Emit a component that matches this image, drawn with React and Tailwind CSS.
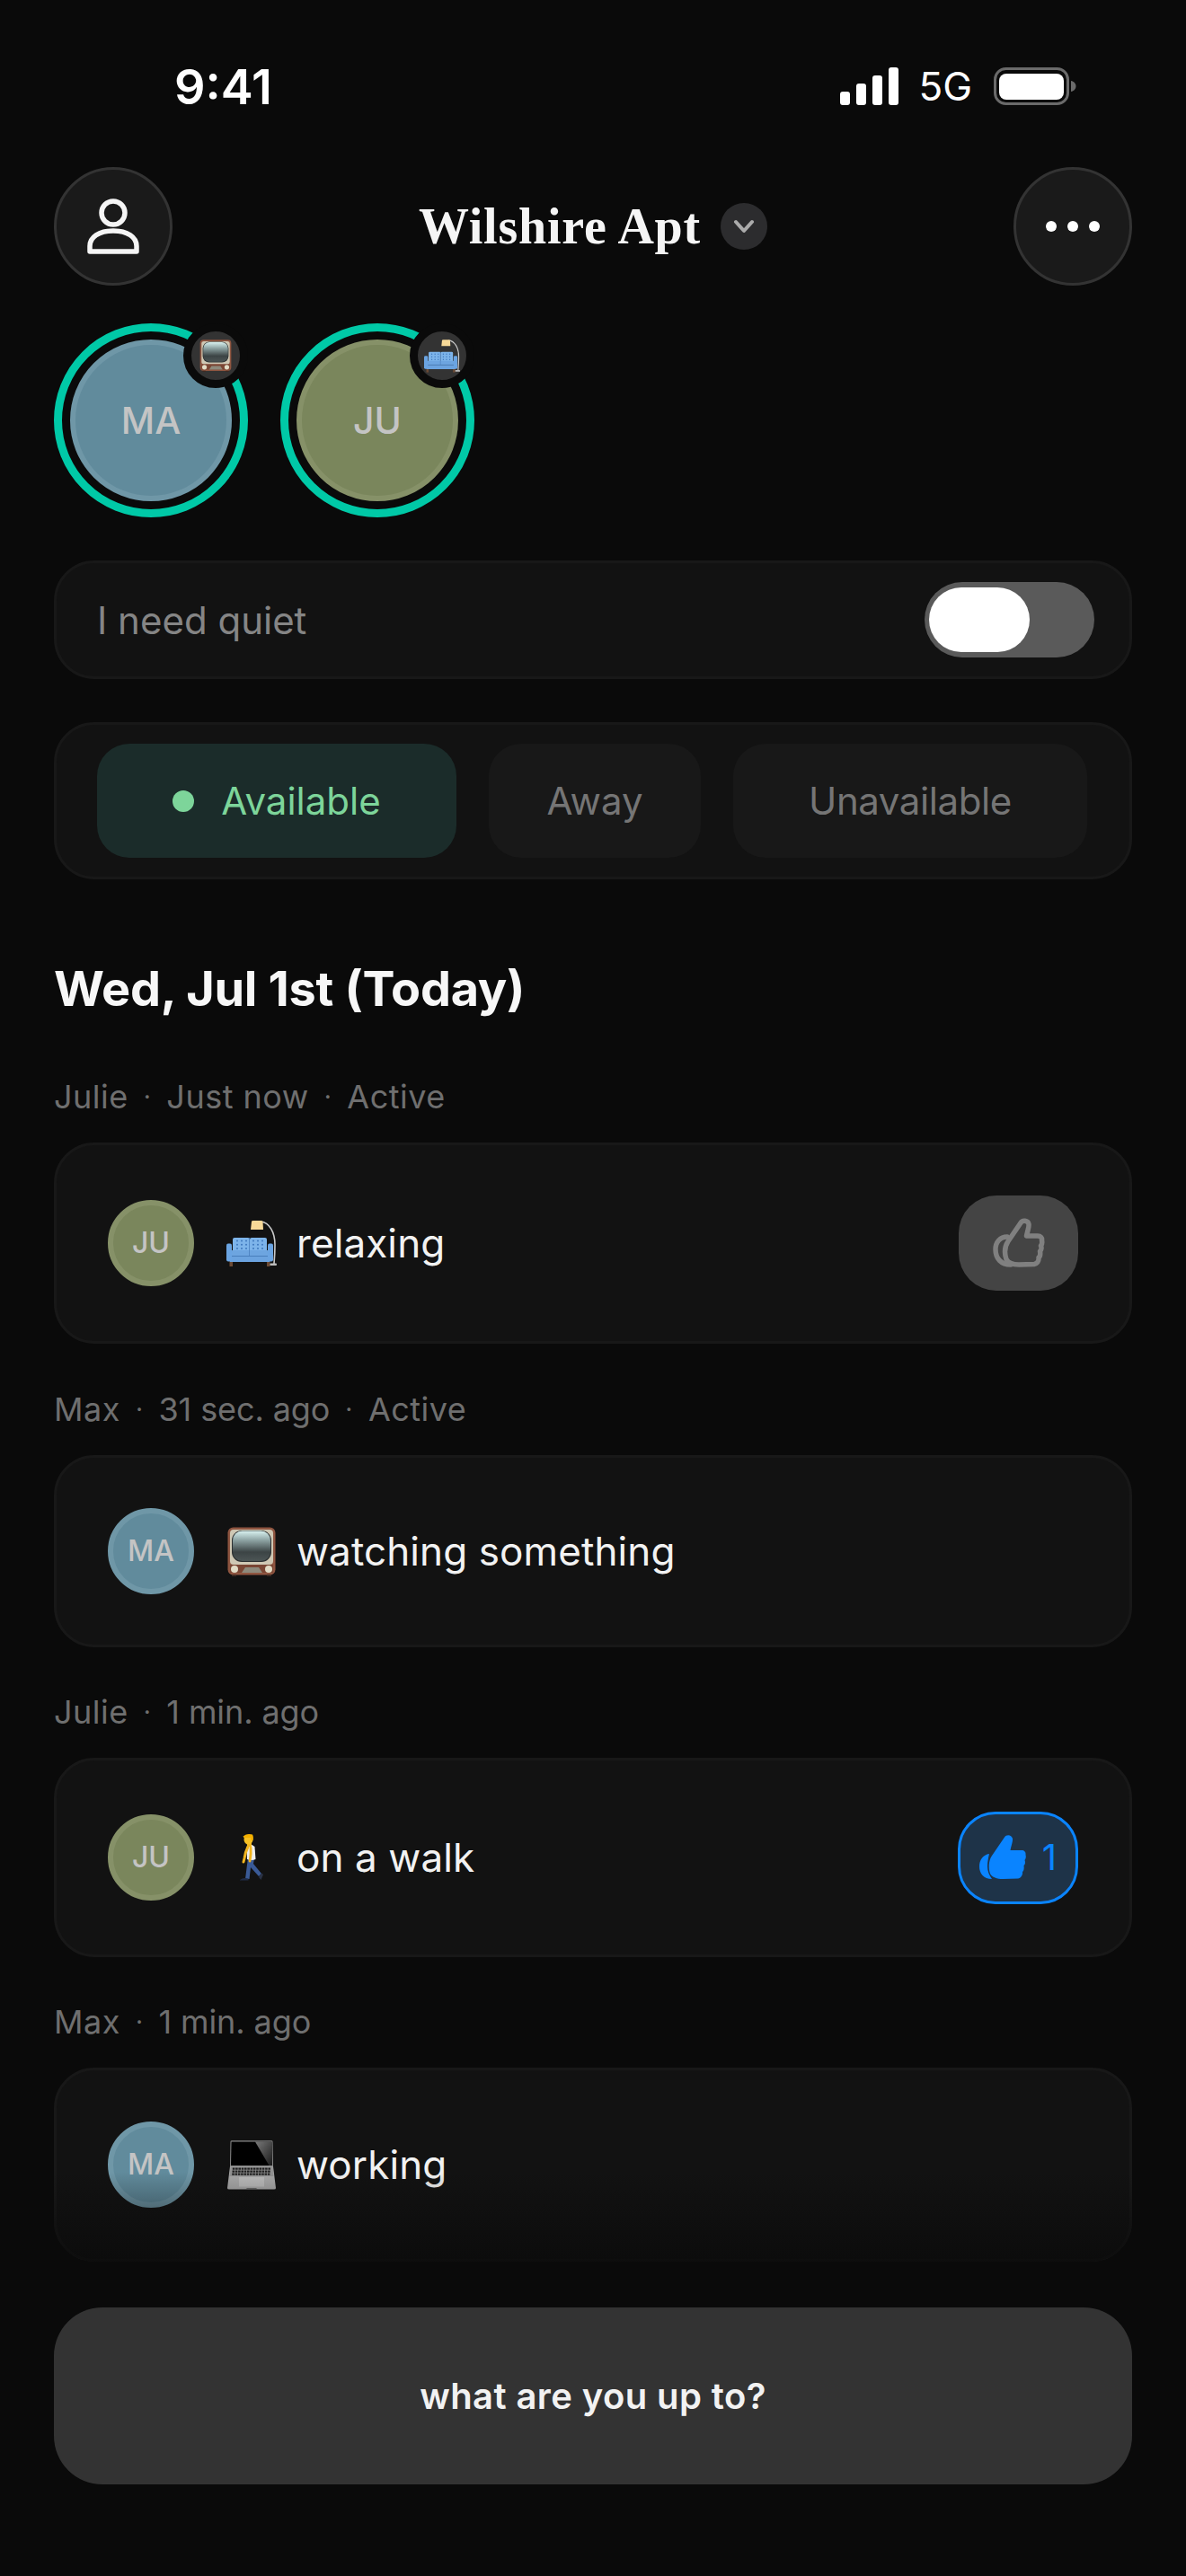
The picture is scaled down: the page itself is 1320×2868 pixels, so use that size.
const sans = "font-['Inter','Liberation_Sans',sans-serif]";

function TvEmoji({ className }) {
  return (
    <svg viewBox="0 0 54 55" className={className}>
      <defs>
        <linearGradient id="tvScreen" x1="0" y1="0" x2="0" y2="1">
          <stop offset="0" stopColor="#d9f2f0" />
          <stop offset="0.3" stopColor="#8fa5a5" />
          <stop offset="0.7" stopColor="#3c4445" />
          <stop offset="1" stopColor="#4c5555" />
        </linearGradient>
      </defs>
      <rect x="0.5" y="0.5" width="53" height="53" rx="6" fill="#8f5540" />
      <rect x="3" y="3" width="48" height="39" rx="4" fill="#cfc8b4" />
      <rect x="5" y="4" width="44" height="35" rx="11" fill="#2c3031" />
      <rect x="6" y="4.5" width="42" height="33.5" rx="10.5" fill="url(#tvScreen)" />
      <rect x="3" y="42" width="48" height="9" fill="#7a4634" />
      <path d="M16 51 L20 45 H35 L39 51 Z" fill="#8e8a7c" />
      <circle cx="8" cy="47" r="4" fill="#e2dcc6" />
      <circle cx="46" cy="47" r="4" fill="#e2dcc6" />
      <rect x="5" y="53" width="5" height="2" fill="#3f2a22" />
      <rect x="44" y="53" width="5" height="2" fill="#3f2a22" />
    </svg>
  );
}

function CouchEmoji({ className }) {
  const dots = [];
  for (let r = 0; r < 3; r++) {
    for (let c = 0; c < 3; c++) {
      dots.push(<circle key={`a${r}${c}`} cx={12 + c * 5} cy={23.5 + r * 4.2} r="1" fill="#3f78bd" />);
      dots.push(<circle key={`b${r}${c}`} cx={30 + c * 5} cy={23.5 + r * 4.2} r="1" fill="#3f78bd" />);
    }
  }
  return (
    <svg viewBox="0 0 56 52" className={className}>
      <path d="M38 2 C48 3 54 14 54 28 C54 36 53.5 43 53 49" fill="none" stroke="#c9c9c9" strokeWidth="1.6" />
      <path d="M27 11 L28 2 Q28 1 30 1 H38 Q40 1 40.5 2 L41 11 Z" fill="#f7d998" />
      <rect x="48" y="48.5" width="8" height="2.5" rx="1" fill="#bdbdbd" />
      <rect x="3.5" y="46" width="3.5" height="6" fill="#6b4a35" />
      <rect x="45" y="46" width="3.5" height="6" fill="#6b4a35" />
      <rect x="7" y="20" width="19" height="17" rx="2" fill="#7db4ea" />
      <rect x="26" y="20" width="19" height="17" rx="2" fill="#7db4ea" />
      {dots}
      <rect x="5" y="34" width="42" height="7" rx="1.5" fill="#6da5e0" />
      <path d="M25.5 20 V40" stroke="#4a7fbe" strokeWidth="0.8" />
      <rect x="4" y="41" width="44" height="6" fill="#6ba3df" />
      <path d="M5 40.5 H47" stroke="#3f74b3" strokeWidth="0.8" />
      <rect x="0" y="26.5" width="6" height="20" rx="2" fill="#6aa4e2" />
      <rect x="46" y="26.5" width="6" height="20" rx="2" fill="#6aa4e2" />
    </svg>
  );
}

function WalkEmoji({ className }) {
  return (
    <svg viewBox="0 0 27 52" className={className}>
      <path d="M7 50 L9 34 L10 27 L17 27 L16 33 L25 44 L22 47 L13 37 L11.5 50 Z" fill="#3a5a96" />
      <path d="M1 51 Q4 48.5 7 49 L10.5 49.5 V51.5 H1 Z" fill="#1f2a44" />
      <path d="M22 48 L25 43.5 L27 45 L24.5 51 Z" fill="#2a3245" />
      <path d="M8.5 15 Q11 11 14.5 12 L17.5 14 L18.5 28 Q14 30 9 28 Z" fill="#eeeeee" />
      <path d="M10 14 Q7 20 6 27 L5 31" fill="none" stroke="#f2b51f" strokeWidth="3" strokeLinecap="round" />
      <path d="M13 15 Q13.5 22 12.5 27 L12 30" fill="none" stroke="#f2b51f" strokeWidth="2.8" strokeLinecap="round" />
      <rect x="9" y="9" width="5" height="5" fill="#f2b51f" />
      <ellipse cx="10.5" cy="6" rx="5" ry="5.5" fill="#f6c024" />
      <path d="M4.5 2.5 Q9 -1 15 0.5 Q16.5 3 15.5 7 L13.5 7.5 L13 4 L5.5 4 Z" fill="#f4b000" />
    </svg>
  );
}

function LaptopEmoji({ className }) {
  const keys = [];
  for (let r = 0; r < 3; r++) {
    for (let c = 0; c < 13; c++) {
      keys.push(<rect key={`${r}${c}`} x={5.8 + c * 3.3 - r * 0.3} y={30.5 + r * 3} width="2.6" height="2.2" fill="#1e1e1e" />);
    }
  }
  return (
    <svg viewBox="0 0 54 55" className={className}>
      <defs>
        <linearGradient id="lapGlare" x1="0" y1="0" x2="1" y2="1">
          <stop offset="0" stopColor="#7a7a7a" />
          <stop offset="1" stopColor="#1a1a1a" />
        </linearGradient>
      </defs>
      <path d="M3.5 1.5 Q3.5 0.3 5 0.3 H49 Q50.5 0.3 50.5 1.5 L51 29 H3 Z" fill="#8c8c8c" />
      <path d="M4.5 1.5 H49.5 L50 28 H4 Z" fill="#000000" />
      <path d="M31 1.5 H49.5 L50 28 H46.5 Z" fill="url(#lapGlare)" />
      <path d="M3 29 H51 L54 53 Q54 54.5 52 54.5 H2 Q0 54.5 0 53 Z" fill="#a9a9a9" />
      <path d="M3.5 29 H50.5 L51.5 40 H2.5 Z" fill="#929292" />
      {keys}
      <rect x="13" y="41" width="28" height="10.5" fill="#bcbcbc" />
      <path d="M20 54.5 L22 53.3 H32 L34 54.5 Z" fill="#555" />
    </svg>
  );
}

function ThumbIcon({ outline, className }) {
  const hand = "M14 24 L28 3.5 C30 0 36 0.5 37 5 C37.5 8 35.5 13 34.5 18 L47 18 C50 18 52 20 51.5 23 C52 25 52 27 50.5 29 C51.5 31 51 34 49.5 35 C50 38 49.5 41 48 42 C48.5 46 46 49 43 49.5 L26 50 C20 50 14 48 12 44 C10 38 10 30 14 24 Z";
  if (outline) {
    return (
      <svg viewBox="-3 -3 58 58" className={className} fill="none" stroke="currentColor" strokeWidth="5.5" strokeLinejoin="round">
        <path d={hand} />
        <path d="M13 19 C5 19 0 25 0 33 C0 43 6 50 17 50" strokeLinecap="round" />
      </svg>
    );
  }
  return (
    <svg viewBox="0 0 52 52" className={className} fill="currentColor">
      <path d={hand} />
      <path d="M11 22 C4 23 0 29 0 36 C0 44 5 50 14 50 C11 46 9 41 9 36 C9 31 10 26 11 22 Z" />
    </svg>
  );
}

function Avatar({ who, small }) {
  const bg = who === "MA" ? "bg-[#618b9c] border-[#6f97a7]" : "bg-[#7a865c] border-[#869168]";
  return small ? (
    <div className={`flex h-[96px] w-[96px] shrink-0 items-center justify-center rounded-full border-[6px] text-[32px] font-medium leading-none text-[#c4c4c4] ${bg}`}>
      {who}
    </div>
  ) : (
    <div className={`flex h-[180px] w-[180px] items-center justify-center rounded-full border-[6px] text-[41px] font-medium leading-none text-[#c4c4c4] ${bg}`}>
      {who}
    </div>
  );
}

function Ring({ who, children }) {
  return (
    <div className="relative flex h-[216px] w-[216px] items-center justify-center rounded-full border-[9px] border-[#00c9a7]">
      <Avatar who={who} />
      <div className="absolute right-[-9px] top-[-9px] flex h-[72px] w-[72px] items-center justify-center rounded-full border-[9px] border-[#0a0a0a] bg-[#333333]">
        {children}
      </div>
    </div>
  );
}

function Meta({ parts }) {
  return (
    <div className="mb-[27px] flex h-[48px] items-center text-[36px] tracking-[0.5px] text-[#6f6f6f]">
      {parts.map((p, i) => (
        <span key={i} className="flex items-center">
          {i > 0 && <span className="mx-[17px] text-[28px]">·</span>}
          <span className={/\d/.test(p) ? "tracking-[-0.1px]" : ""}>{p}</span>
        </span>
      ))}
    </div>
  );
}

function Card({ who, emoji, label, height, children, fade }) {
  return (
    <div className={`relative flex items-center rounded-[45px] border-[3px] border-[#181818] bg-[#121212] pl-[57px] pr-[57px] ${height}`}>
      <Avatar who={who} small />
      <div className="ml-[35px] flex w-[57px] shrink-0 items-center justify-center">{emoji}</div>
      <span className="ml-[22px] text-[44px] leading-none tracking-[0.1px] text-[#f2f2f2]">{label}</span>
      {children}
      {fade && (
        <div className="absolute inset-x-[-3px] bottom-[-3px] h-[100px] rounded-b-[45px] bg-gradient-to-b from-transparent to-[#0a0a0ac0]" />
      )}
    </div>
  );
}

export default function App() {
  return (
    <div className={`h-[2868px] w-[1320px] overflow-hidden bg-[#0a0a0a] px-[60px] text-white ${sans}`}>
      {/* status bar */}
      <div className="flex h-[186px] items-start justify-between">
        <span className="ml-[134px] mt-[66px] text-[54px] font-semibold leading-[62px]">9:41</span>
        <div className="mr-[62px] mt-[75px] flex items-center">
          <svg viewBox="0 0 65 42" className="h-[42px] w-[65px]" fill="#ffffff">
            <rect x="0" y="27" width="11" height="15" rx="3" />
            <rect x="18" y="18" width="11" height="24" rx="3" />
            <rect x="36" y="9" width="11" height="33" rx="3" />
            <rect x="54" y="0" width="11" height="42" rx="3" />
          </svg>
          <span className="ml-[22px] text-[44px] font-normal leading-[42px]">5G</span>
          <svg viewBox="0 0 92 42" className="ml-[24px] h-[42px] w-[92px]" fill="none">
            <rect x="1.5" y="1.5" width="81" height="39" rx="12" stroke="#6a6a6a" strokeWidth="3" />
            <rect x="6" y="7" width="72" height="29" rx="8" fill="#ffffff" />
            <path d="M86 15 C89 15.5 91.5 18 91.5 21 C91.5 24 89 26.5 86 27 Z" fill="#6a6a6a" />
          </svg>
        </div>
      </div>

      {/* header */}
      <div className="flex h-[132px] items-center justify-between">
        <button className="flex h-[132px] w-[132px] items-center justify-center rounded-full border-[3px] border-[#333333] bg-[#1a1a1a]">
          <svg viewBox="0 0 58 62" className="h-[62px] w-[58px]" fill="none" stroke="#f5f5f5" strokeWidth="5.5">
            <circle cx="29" cy="16" r="13" />
            <path d="M3 59 V53 C3 43 13 36 29 36 C45 36 55 43 55 53 V59 Z" strokeLinejoin="round" />
          </svg>
        </button>
        <div className="flex items-center">
          <span className="font-['Liberation_Serif',serif] text-[56px] font-bold leading-none tracking-[0.8px] text-[#f5f5f5]">Wilshire Apt</span>
          <div className="ml-[22px] flex h-[52px] w-[52px] items-center justify-center rounded-full bg-[#2c2c2e]">
            <svg viewBox="0 0 24 16" className="h-[16px] w-[24px]" fill="none" stroke="#ababab" strokeWidth="4" strokeLinecap="round" strokeLinejoin="round">
              <path d="M3 3 L12 13 L21 3" />
            </svg>
          </div>
        </div>
        <button className="flex h-[132px] w-[132px] items-center justify-center gap-[12px] rounded-full border-[3px] border-[#333333] bg-[#1a1a1a]">
          <span className="h-[12px] w-[12px] rounded-full bg-white" />
          <span className="h-[12px] w-[12px] rounded-full bg-white" />
          <span className="h-[12px] w-[12px] rounded-full bg-white" />
        </button>
      </div>

      {/* people */}
      <div className="mt-[42px] flex gap-[36px]">
        <Ring who="MA"><TvEmoji className="h-[36px] w-[36px]" /></Ring>
        <Ring who="JU"><CouchEmoji className="h-[38px] w-[40px]" /></Ring>
      </div>

      {/* quiet */}
      <div className="mt-[48px] flex h-[132px] items-center justify-between rounded-[45px] border-[3px] border-[#181818] bg-[#121212] pl-[45px] pr-[39px]">
        <span className="text-[42px] tracking-[0px] text-[#858585]">I need quiet</span>
        <div className="flex h-[84px] w-[189px] items-center rounded-full bg-[#5a5a5a] pl-[5px]">
          <div className="h-[72px] w-[112px] rounded-full bg-white" />
        </div>
      </div>

      {/* status */}
      <div className="mt-[48px] flex h-[175px] items-center gap-[36px] rounded-[45px] border-[3px] border-[#181818] bg-[#121212] pl-[45px]">
        <div className="flex h-[127px] w-[400px] items-center justify-center gap-[30px] rounded-[36px] bg-[#1b2c2a] text-[42px] text-[#7dd59a]">
          <span className="h-[24px] w-[24px] rounded-full bg-[#7dd59a]" />
          Available
        </div>
        <div className="flex h-[127px] w-[236px] items-center justify-center rounded-[36px] bg-[#181818] text-[42px] text-[#757575]">Away</div>
        <div className="flex h-[127px] w-[394px] items-center justify-center rounded-[36px] bg-[#181818] text-[42px] tracking-[-0.4px] text-[#757575]">Unavailable</div>
      </div>

      {/* heading */}
      <h1 className="mt-[85px] h-[74px] text-[54px] font-bold leading-[74px] tracking-[-0.3px] text-[#f7f7f7]">Wed, Jul 1st (Today)</h1>

      {/* feed */}
      <div className="mt-[59px]">
        <Meta parts={["Julie", "Just now", "Active"]} />
        <Card who="JU" label="relaxing" height="h-[224px]" emoji={<CouchEmoji className="h-[52px] w-[56px]" />}>
          <button className="ml-auto flex h-[106px] w-[133px] items-center justify-center rounded-[42px] bg-[#444444] text-[#808080]">
            <ThumbIcon outline className="h-[58px] w-[58px]" />
          </button>
        </Card>

        <div className="mt-[49px]">
          <Meta parts={["Max", "31 sec. ago", "Active"]} />
          <Card who="MA" label="watching something" height="h-[214px]" emoji={<TvEmoji className="h-[55px] w-[54px]" />} />
        </div>

        <div className="mt-[48px]">
          <Meta parts={["Julie", "1 min. ago"]} />
          <Card who="JU" label="on a walk" height="h-[222px]" emoji={<WalkEmoji className="h-[52px] w-[27px]" />}>
            <button className="ml-auto flex h-[103px] w-[134px] items-center justify-center gap-[18px] rounded-[42px] border-[3px] border-[#0a84ff] bg-[#1e3348] text-[40px] leading-none text-[#0a84ff]">
              <ThumbIcon className="h-[52px] w-[52px]" />
              1
            </button>
          </Card>
        </div>

        <div className="mt-[48px]">
          <Meta parts={["Max", "1 min. ago"]} />
          <Card who="MA" label="working" height="h-[216px]" fade emoji={<LaptopEmoji className="h-[55px] w-[54px]" />} />
        </div>
      </div>

      {/* cta */}
      <button className="mt-[51px] flex h-[197px] w-full items-center justify-center rounded-[54px] bg-[#333333] text-[40px] font-semibold tracking-[0.4px] text-[#f2f2f2]">
        what are you up to?
      </button>
    </div>
  );
}
